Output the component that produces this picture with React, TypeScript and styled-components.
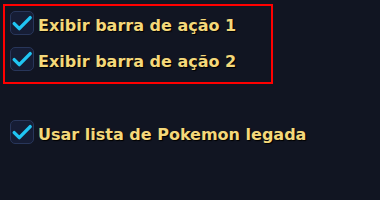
import React, { useState } from 'react'
import styled, { createGlobalStyle } from 'styled-components'

const GlobalStyle = createGlobalStyle`
  html, body {
    margin: 0;
    padding: 0;
    background: #111522;
  }
`

interface OptionProps {
  label: string
  checked: boolean
  onToggle: () => void
}

const CheckIcon = () => (
  <svg width="24" height="24" viewBox="0 0 24 24">
    <path d="M4.2 12.6 L9.3 17.6 L20.2 6.6" fill="none" stroke="#20c5f3" strokeWidth="3.4" strokeLinecap="round" strokeLinejoin="round" />
  </svg>
)

const Option = ({ label, checked, onToggle }: OptionProps) => (
  <S.Row onClick={onToggle}>
    <S.Box>{checked && <CheckIcon />}</S.Box>
    <S.Label>{label}</S.Label>
  </S.Row>
)

export default function App() {
  const [opts, setOpts] = useState({ bar1: true, bar2: true, legacy: true })

  const toggle = (key: keyof typeof opts) => {
    setOpts({ ...opts, [key]: !opts[key] })
  }

  return (
    <S.Page>
      <GlobalStyle />
      <S.Highlight>
        <Option label="Exibir barra de ação 1" checked={opts.bar1} onToggle={() => toggle('bar1')} />
        <Option label="Exibir barra de ação 2" checked={opts.bar2} onToggle={() => toggle('bar2')} />
      </S.Highlight>
      <S.Section>
        <Option label="Usar lista de Pokemon legada" checked={opts.legacy} onToggle={() => toggle('legacy')} />
      </S.Section>
    </S.Page>
  )
}

export const S = {
  Page: styled.div`
    width: 380px;
    height: 200px;
    box-sizing: border-box;
    padding: 4px 0 0 3px;
    background: #111522;
    font-family: 'DejaVu Sans', sans-serif;
  `,
  Highlight: styled.div`
    width: 270px;
    height: 80px;
    box-sizing: border-box;
    border: 2px solid #ff0000;
    padding: 5px 0 0 5px;
    display: flex;
    flex-direction: column;
    gap: 12px;
  `,
  Section: styled.div`
    padding: 36px 0 0 7px;
  `,
  Row: styled.div`
    display: flex;
    align-items: flex-end;
    gap: 4px;
    cursor: pointer;
  `,
  Box: styled.div`
    width: 24px;
    height: 24px;
    flex-shrink: 0;
    box-sizing: border-box;
    border: 1.5px solid #28365a;
    border-radius: 5px;
    background: #161d35;
    display: flex;
    align-items: center;
    justify-content: center;
    svg {
      margin: -1.5px;
    }
  `,
  Label: styled.span`
    font-size: 16px;
    font-weight: bold;
    color: #f4d87a;
    text-shadow: 1px 1px 1px #000;
    line-height: 18px;
  `,
}
